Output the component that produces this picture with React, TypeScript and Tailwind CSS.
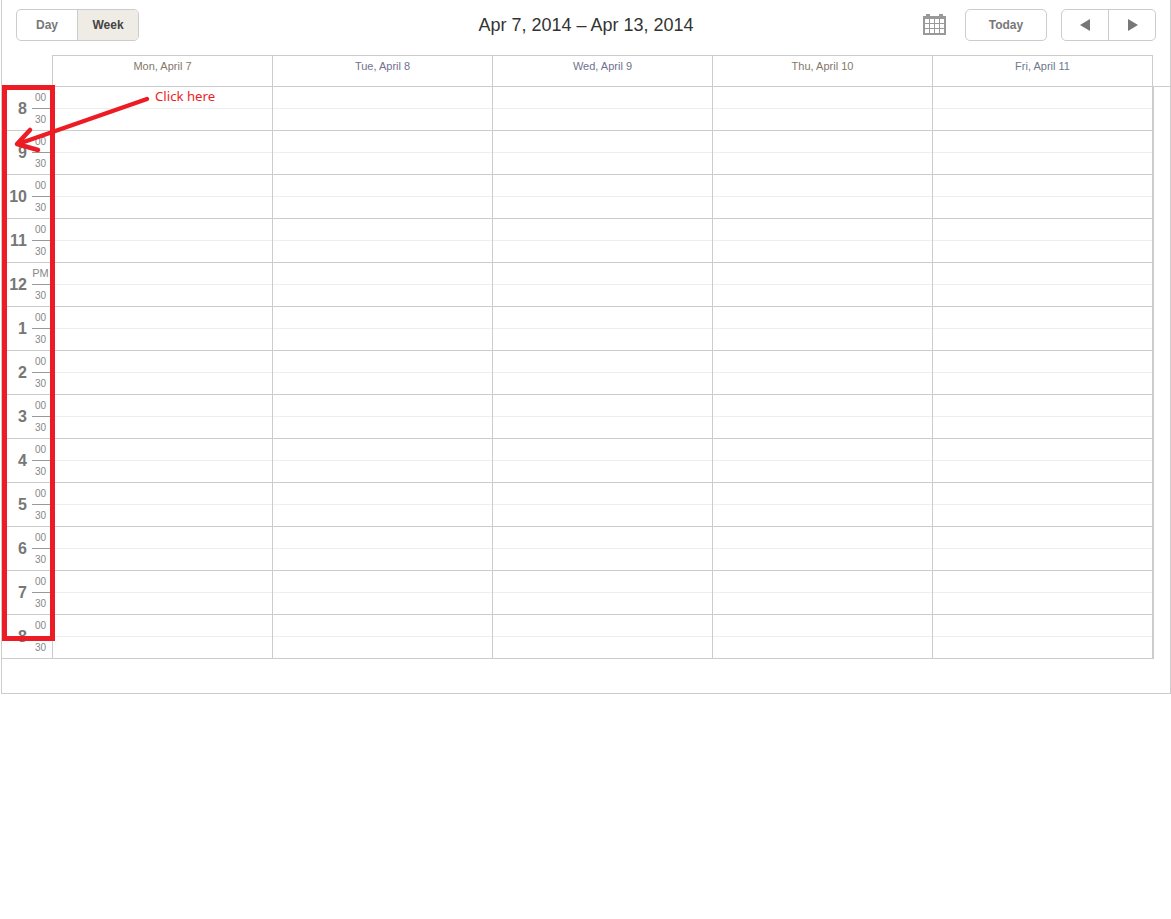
const days = [
  { label: "Mon, April 7", color: "text-[#83786a]" },
  { label: "Tue, April 8", color: "text-[#707290]" },
  { label: "Wed, April 9", color: "text-[#707290]" },
  { label: "Thu, April 10", color: "text-[#83786a]" },
  { label: "Fri, April 11", color: "text-[#6c7890]" },
];

const hours = ["8", "9", "10", "11", "12", "1", "2", "3", "4", "5", "6", "7", "8"];

const CalendarIcon = () => (
  <svg width="23" height="21" viewBox="0 0 23 21" className="block">
    <path d="M0 2H3V0H7V2H16V0H20V2H23V21H0Z" fill="#999999" />
    {[0, 1, 2, 3].map((c) =>
      [0, 1, 2].map((r) => (
        <rect key={`${c}-${r}`} x={2 + c * 5} y={5 + r * 5} width="4" height="4" fill="#ffffff" />
      ))
    )}
  </svg>
);

const App = () => (
  <div className="relative w-[1171px] h-[919px] bg-white font-['Liberation_Sans',Arial,sans-serif]">
    <div className="ml-px w-[1170px] h-[694px] border-x border-b border-[#cccccc]">
      {/* toolbar */}
      <div className="flex items-start h-[55px] pt-[9px] pl-[14px] pr-[14px]">
        <div className="flex w-[123px] h-[32px] border border-[#cccccc] rounded-[5px] overflow-hidden text-xs font-bold">
          <button className="w-[60px] text-[#777777]">Day</button>
          <button className="flex-1 border-l border-[#cccccc] bg-[#efece6] text-[#444444]">Week</button>
        </div>
        <div className="flex-1 pl-[110px] text-center text-lg leading-[32px] text-[#333333]">Apr 7, 2014 – Apr 13, 2014</div>
        <div className="mt-[5px]">
          <CalendarIcon />
        </div>
        <button className="ml-[19px] w-[82px] h-[32px] border border-[#cccccc] rounded-[5px] text-xs font-bold text-[#777777]">
          Today
        </button>
        <div className="ml-[14px] flex w-[95px] h-[32px] border border-[#cccccc] rounded-[5px]">
          <button className="w-[46px] flex items-center justify-center">
            <span className="w-0 h-0 border-y-[6.5px] border-y-transparent border-r-[10px] border-r-[#777777]" />
          </button>
          <button className="flex-1 flex items-center justify-center pl-[2px] border-l border-[#cccccc]">
            <span className="w-0 h-0 border-y-[6.5px] border-y-transparent border-l-[10px] border-l-[#777777]" />
          </button>
        </div>
      </div>

      {/* day header */}
      <div className="flex ml-[50px] w-[1101px] h-[31px] border-t border-r border-[#cccccc]">
        {days.map((d) => (
          <div key={d.label} className={`w-[220px] border-l border-[#cccccc] pt-[4px] text-center text-[11px] leading-[13px] ${d.color}`}>
            {d.label}
          </div>
        ))}
      </div>

      {/* time grid */}
      <div className="border-t border-[#cccccc]">
        {hours.map((h, i) => (
          <div key={i} className="flex w-[1152px] h-[44px] border-b border-[#cccccc]">
            <div className="flex w-[50px] shrink-0">
              <div className="w-[25px] text-right self-center text-base font-bold leading-none text-[#777777]">{h}</div>
              <div className="ml-[5px] w-[18px] text-[10px] text-center text-[#888888]">
                {h === "12" ? (
                  <div className="h-[22px] pr-px leading-[20px] text-[11px] border-b border-[#999999]">PM</div>
                ) : (
                  <div className="h-[22px] pr-px leading-[22px] border-b border-[#999999]">00</div>
                )}
                <div className="h-[21px] pr-px leading-[22px]">30</div>
              </div>
            </div>
            {days.map((d) => (
              <div key={d.label} className="w-[220px] border-l border-[#cccccc]">
                <div className="h-[22px] border-b border-[#eeeeee]" />
              </div>
            ))}
            <div className="w-[2px] bg-[#cccccc]" />
          </div>
        ))}
      </div>
    </div>

    {/* annotation */}
    <div className="absolute left-[2px] top-[85px] w-[53px] h-[556px] border-[5px] border-[#ed1c24]" />
    <svg className="absolute left-0 top-0 pointer-events-none" width="200" height="170" viewBox="0 0 200 170">
      <path d="M147 99 L18 144 M30 130 L17 144 L38 150" fill="none" stroke="#ed1c24" strokeWidth="4.5" strokeLinecap="round" strokeLinejoin="round" />
    </svg>
    <span className="absolute left-[155px] top-[87px] text-[13.2px] leading-[18px] text-[#ed1c24] font-['Noto_Sans',sans-serif]">Click here</span>
  </div>
);

export default App;
